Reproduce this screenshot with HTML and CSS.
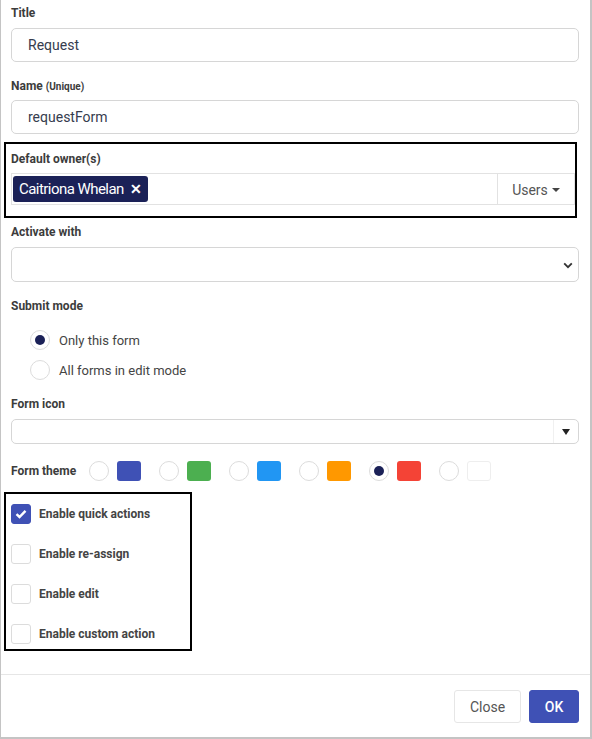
FILE: index.html
```html
<!DOCTYPE html>
<html>
<head>
<meta charset="utf-8">
<link rel="stylesheet" href="styles.css">
</head>
<body>
<div class="dialog">
  <div class="content">
    <div class="field first">
      <div class="label">Title</div>
      <div class="input">Request</div>
    </div>
    <div class="field name">
      <div class="label">Name <span class="small">(Unique)</span></div>
      <div class="input">requestForm</div>
    </div>
    <div class="highlight owners">
      <div class="label">Default owner(s)</div>
      <div class="group">
        <div class="tags"><span class="chip">Caitriona Whelan <span class="x">✕</span></span></div>
        <div class="users">Users <span class="caret"></span></div>
      </div>
    </div>
    <div class="field activate">
      <div class="label">Activate with</div>
      <div class="select">
        <svg class="chev" width="10" height="7" viewBox="0 0 10 7"><path d="M1.2 1.3 L5 5.2 L8.8 1.3" fill="none" stroke="#333" stroke-width="1.8"/></svg>
      </div>
    </div>
    <div class="field submit">
      <div class="label">Submit mode</div>
      <div class="radios">
        <div class="rrow"><span class="radio on"></span><span>Only this form</span></div>
        <div class="rrow"><span class="radio"></span><span>All forms in edit mode</span></div>
      </div>
    </div>
    <div class="field icon">
      <div class="label">Form icon</div>
      <div class="select small-select">
        <span class="sep"></span>
        <span class="tri"></span>
      </div>
    </div>
    <div class="theme">
      <div class="label tl">Form theme</div>
      <div class="opt"><span class="radio"></span><span class="sw indigo"></span></div>
      <div class="opt"><span class="radio"></span><span class="sw green"></span></div>
      <div class="opt"><span class="radio"></span><span class="sw blue"></span></div>
      <div class="opt"><span class="radio"></span><span class="sw orange"></span></div>
      <div class="opt"><span class="radio on"></span><span class="sw red"></span></div>
      <div class="opt"><span class="radio"></span><span class="sw white"></span></div>
    </div>
    <div class="highlight checks">
      <div class="crow"><span class="cb on"><svg width="12" height="10" viewBox="0 0 12 10"><path d="M1.5 5.2 L4.5 8 L10.5 1.8" fill="none" stroke="#fff" stroke-width="2.4"/></svg></span><span class="cl">Enable quick actions</span></div>
      <div class="crow"><span class="cb"></span><span class="cl">Enable re-assign</span></div>
      <div class="crow"><span class="cb"></span><span class="cl">Enable edit</span></div>
      <div class="crow"><span class="cb"></span><span class="cl">Enable custom action</span></div>
    </div>
  </div>
  <div class="footer">
    <button class="btn close">Close</button>
    <button class="btn ok">OK</button>
  </div>
</div>
</body>
</html>
```
FILE: styles.css
```css
* { box-sizing: border-box; }
html, body { margin: 0; padding: 0; background: #fff; }
body { font-family: Roboto, "Noto Sans", Arial, sans-serif; color: #3a3a3a; }

.dialog {
  width: 592px;
  height: 739px;
  border-left: 1px solid #c4c4c4;
  border-right: 2px solid #c4c4c4;
  border-bottom: 2px solid #c4c4c4;
  display: flex;
  flex-direction: column;
}
.content {
  flex: 1;
  padding: 5px 11px 0 10px;
}
.label {
  font-size: 12px;
  font-weight: 700;
  line-height: 16px;
  height: 16px;
  color: #3c3c3c;
  margin-bottom: 7px;
}
.label .small { font-size: 10px; line-height: 10px; }
.field { margin-top: 16px; }
.field.first { margin-top: 0; }
.field.name .label { margin-bottom: 6px; }
.input {
  height: 34px;
  border: 1px solid #d6d6d6;
  border-radius: 5px;
  padding: 0 16px;
  font-size: 14px;
  line-height: 32px;
  color: #363c4e;
}

.highlight { border: 2px solid #000; }
.owners {
  margin: 8px 2px 0 -7px;
  padding: 7px 0 11px 5px;
}
.owners .label { margin-bottom: 6px; }
.group {
  display: flex;
  height: 32px;
}
.tags {
  flex: 1;
  border: 1px solid #e2e2e2;
  border-right: none;
  padding: 2px 1px;
}
.chip {
  display: inline-flex;
  align-items: center;
  height: 26px;
  padding: 0 6px 0 6px;
  background: #1b2157;
  color: #fff;
  border-radius: 3px;
  font-size: 15px;
  letter-spacing: -0.55px;
}
.chip .x { font-weight: 700; margin-left: 6px; font-size: 14px; letter-spacing: 0; }
.users {
  width: 78px;
  border: 1px solid #e2e2e2;
  display: flex;
  align-items: center;
  justify-content: center;
  font-size: 14px;
  color: #555;
  padding-top: 2px;
}
.caret {
  display: inline-block;
  width: 0; height: 0;
  border-left: 4px solid transparent;
  border-right: 4px solid transparent;
  border-top: 4px solid #444;
  margin-left: 4px;
}

.field.activate { margin-top: 6px; }
.select {
  height: 35px;
  border: 1px solid #d6d6d6;
  border-radius: 5px;
  display: flex;
  align-items: center;
  justify-content: flex-end;
  padding-right: 5px;
}
.chev { margin-top: 1px; }

.radios { margin-top: 11px; padding-left: 19px; }
.rrow {
  height: 30px;
  display: flex;
  align-items: center;
  gap: 9px;
  font-size: 13px;
  color: #444;
}
.radio {
  width: 20px; height: 20px;
  border: 1px solid #dcdcdc;
  border-radius: 50%;
  display: inline-flex;
  align-items: center;
  justify-content: center;
  background: #fff;
  flex: none;
}
.radio.on::after {
  content: "";
  width: 10px; height: 10px;
  border-radius: 50%;
  background: #1b2157;
}

.field.icon { margin-top: 11px; }
.small-select {
  height: 25px;
  padding-right: 0;
}
.sep { width: 1px; height: 23px; background: #f0f0f0; }
.tri {
  width: 0; height: 0;
  border-left: 4px solid transparent;
  border-right: 4px solid transparent;
  border-top: 6px solid #222;
  margin: 1px 8px 0 8px;
}

.theme {
  margin-top: 16px;
  display: flex;
  align-items: center;
  height: 21px;
  gap: 18px;
}
.theme .tl { margin: 0; width: 60px; white-space: nowrap; }
.opt { display: flex; align-items: center; gap: 8px; }
.sw { width: 24px; height: 20px; border-radius: 3px; }
.indigo { background: #3f51b5; }
.green { background: #4caf50; }
.blue { background: #2196f3; }
.orange { background: #ff9800; }
.red { background: #f44336; }
.white { background: #fff; border: 1px solid #eee; }

.checks {
  margin: 11px 0 0 -7px;
  width: 188px;
  padding: 10px 0 5px 5px;
  display: flex;
  flex-direction: column;
  gap: 20px;
}
.crow { display: flex; align-items: center; height: 20px; gap: 8px; }
.cb {
  width: 20px; height: 20px;
  border: 1px solid #dcdcdc;
  border-radius: 3px;
  display: inline-flex;
  align-items: center;
  justify-content: center;
  flex: none;
}
.cb.on { background: #3f51b5; border-color: #3f51b5; }
.cl { font-size: 12px; font-weight: 700; color: #444; }

.footer {
  border-top: 1px solid #e6e6e6;
  height: 63px;
  padding: 15px 11px 0 0;
  display: flex;
  justify-content: flex-end;
  gap: 8px;
}
.btn {
  height: 33px;
  border-radius: 3px;
  font-family: Roboto, "Noto Sans", Arial, sans-serif;
  font-size: 14px;
  padding: 0;
}
.close {
  width: 67px;
  background: #fff;
  border: 1px solid #e6e6e6;
  color: #555;
}
.ok {
  width: 50px;
  background: #3f51b5;
  border: 1px solid #3f51b5;
  color: #fff;
  font-weight: 500;
}
```
